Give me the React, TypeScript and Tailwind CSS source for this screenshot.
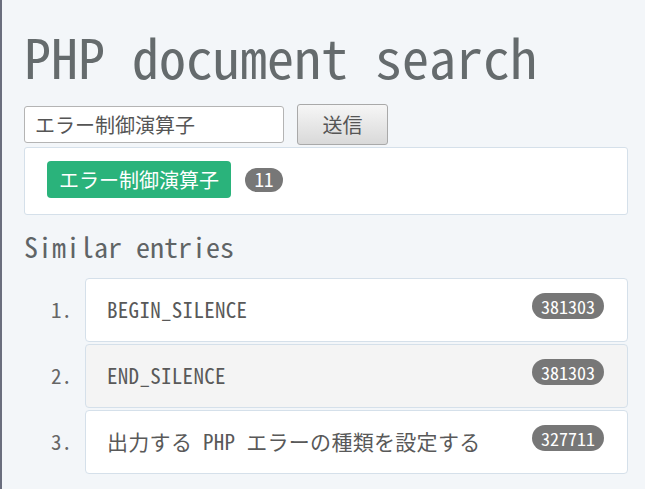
const mono = "font-['Noto_Sans_Mono_CJK_JP','DejaVu_Sans_Mono',monospace]";
const sans = "font-['Noto_Sans_CJK_JP','Noto_Sans',sans-serif]";

const entries = [
  { title: "BEGIN_SILENCE", count: "381303", shaded: false },
  { title: "END_SILENCE", count: "381303", shaded: true },
  { title: "出力する PHP エラーの種類を設定する", count: "327711", shaded: false },
];

export default function App() {
  return (
    <div className="min-h-screen w-full bg-[#f3f6f9] border-l-2 border-[#6a6e7e] pl-[22px] pr-[17px] pt-[29px] pb-4">
      <h1 className={`${mono} text-[54px] leading-none text-[#656b6d]`}>PHP document search</h1>

      <form className="mt-[21px] flex items-center gap-[13px]" onSubmit={(e) => e.preventDefault()}>
        <input
          defaultValue="エラー制御演算子"
          className={`${sans} h-[37px] w-[260px] rounded-[3px] border border-[#b4b4b4] bg-white pl-[10px] text-[20px] text-[#555] outline-none`}
        />
        <button
          type="submit"
          className={`${sans} h-[41px] w-[91px] rounded-[3px] border border-[#a9a9a9] bg-gradient-to-b from-[#f6f6f6] to-[#d9d9d9] text-[20px] text-[#555]`}
        >
          送信
        </button>
      </form>

      <div className="mt-[2px] h-[68px] rounded-[3px] border border-[#d5e0ea] bg-white pl-[22px] pt-[13px]">
        <div className="flex items-center gap-[14px]">
          <span className={`${sans} flex h-[37px] items-center rounded-[4px] bg-[#2ab37b] px-[12px] text-[20px] text-white`}>
            エラー制御演算子
          </span>
          <span className={`${mono} flex h-[24px] w-[38px] items-center justify-center rounded-full bg-[#777] text-[19px] text-white`}>
            11
          </span>
        </div>
      </div>

      <h2 className={`${mono} mt-[17px] text-[28px] leading-none text-[#5f6466]`}>Similar entries</h2>

      <ol className="mt-[18px] flex flex-col gap-[2px]">
        {entries.map((e, i) => (
          <li key={i} className="flex items-center gap-[13px]">
            <span className={`${mono} w-[48px] text-right text-[21px] text-[#666]`}>{i + 1}.</span>
            <div
              className={`flex h-[64px] flex-1 items-center justify-between rounded-[4px] border border-[#d5e0ea] pl-[21px] pr-[23px] ${
                e.shaded ? "bg-[#f4f4f4]" : "bg-white"
              }`}
            >
              <span className={`${mono} text-[21px] tracking-[0.3px] text-[#595959]`}>{e.title}</span>
              <span
                className={`${mono} mb-[8px] flex h-[26px] items-center rounded-full bg-[#777] px-[9px] text-[18px] text-white`}
              >
                {e.count}
              </span>
            </div>
          </li>
        ))}
      </ol>
    </div>
  );
}
